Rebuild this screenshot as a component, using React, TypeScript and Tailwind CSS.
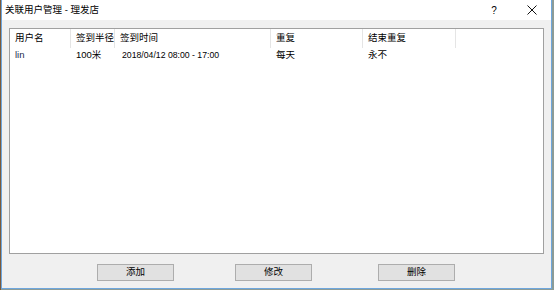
export default function App() {
  const cols = [
    { title: "用户名", w: "w-[61px]" },
    { title: "签到半径", w: "w-[44px]" },
    { title: "签到时间", w: "w-[156px]" },
    { title: "重复", w: "w-[92px]" },
    { title: "结束重复", w: "w-[93px]" },
  ];
  const row = ["lin", "100米", "2018/04/12 08:00 - 17:00", "每天", "永不"];

  return (
    <div
      className="w-[554px] h-[290px] bg-[#8d9c97] flex text-[#000]"
      style={{ fontFamily: '"Liberation Sans", "Noto Sans CJK SC", sans-serif' }}
    >
      <div className="w-[1px] h-full bg-[#7a5a3c]" />
      <div className="w-[551px] h-[289px] border-x border-b border-[#6ea6dd] bg-[#f0f0f0] flex flex-col">
        {/* Title bar */}
        <div className="h-[20px] bg-white flex items-center pl-[3px] pr-[10px] text-[9.5px]">
          <span className="flex-1">关联用户管理 - 理发店</span>
          <span className="w-[10px] text-center mr-[28px] text-[10px]">?</span>
          <svg width="10" height="10" viewBox="0 0 10 10" className="mr-[4px]">
            <line x1="0.5" y1="0.5" x2="9.5" y2="9.5" stroke="#111" strokeWidth="1" />
            <line x1="9.5" y1="0.5" x2="0.5" y2="9.5" stroke="#111" strokeWidth="1" />
          </svg>
        </div>

        {/* List */}
        <div className="mt-[8px] mx-[7px] h-[226px] bg-white border border-[#a0a0a0] text-[9.5px]">
          <div className="flex h-[19px]">
            {cols.map((c) => (
              <div key={c.title} className={`${c.w} h-full flex items-center pl-[5px] border-r border-[#e5e5e5]`}>
                {c.title}
              </div>
            ))}
          </div>
          <div className="flex h-[15px]">
            {row.map((v, i) => (
              <div
                key={i}
                className={`${cols[i].w} h-full flex items-center ${i === 2 ? "pl-[7px] text-[8.7px]" : "pl-[5px]"} ${i === 0 ? "text-[#1a2a4a]" : ""}`}
              >
                {v}
              </div>
            ))}
          </div>
        </div>

        {/* Buttons */}
        <div className="mt-[10px] flex pl-[95px] text-[9.5px]">
          <button className="w-[77px] h-[17px] bg-[#e1e1e1] border border-[#adadad] flex items-center justify-center">
            添加
          </button>
          <button className="ml-[61px] w-[77px] h-[17px] bg-[#e1e1e1] border border-[#adadad] flex items-center justify-center">
            修改
          </button>
          <button className="ml-[66px] w-[77px] h-[17px] bg-[#e1e1e1] border border-[#adadad] flex items-center justify-center">
            删除
          </button>
        </div>
      </div>
    </div>
  );
}
